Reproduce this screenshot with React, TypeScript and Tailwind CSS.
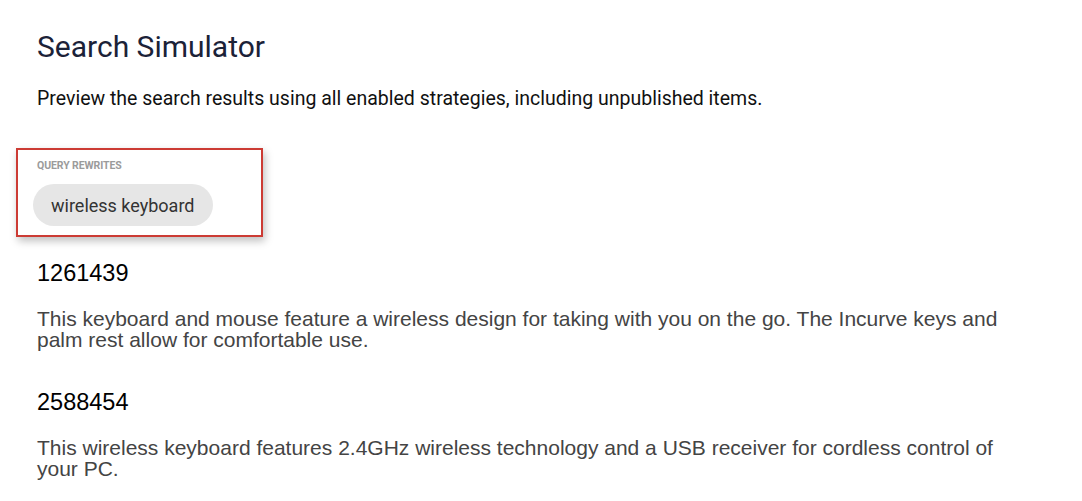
import React from "react";

const results = [
  {
    id: "1261439",
    desc: "This keyboard and mouse feature a wireless design for taking with you on the go. The Incurve keys and palm rest allow for comfortable use.",
  },
  {
    id: "2588454",
    desc: "This wireless keyboard features 2.4GHz wireless technology and a USB receiver for cordless control of your PC.",
  },
];

export default function App() {
  return (
    <div className="min-h-[501px] w-[1082px] bg-white px-[37px] pt-[29px]">
      <h1 className="font-['Roboto',sans-serif] text-[30px] leading-[36px] font-normal text-[#1b2238]">
        Search Simulator
      </h1>
      <p className="mt-[21px] font-['Roboto',sans-serif] text-[19.5px] leading-[26px] text-[#111111]">
        Preview the search results using all enabled strategies, including unpublished items.
      </p>

      <div className="mt-[36px] -ml-[21px] w-[247px] border-2 border-[#cc3b34] bg-white pt-[10px] pb-[9px] pl-[15px] shadow-[2px_4px_8px_rgba(0,0,0,0.25)]">
        <div className="ml-[4px] font-['Roboto',sans-serif] text-[10.5px] leading-[12px] font-bold uppercase tracking-[-0.1px] text-[#9b9b9b]">
          Query Rewrites
        </div>
        <div className="mt-[12px] flex">
          <span className="flex h-[42px] items-center rounded-full bg-[#e6e6e6] px-[18px] font-['Roboto',sans-serif] text-[18px] text-[#333333]">
            wireless keyboard
          </span>
        </div>
      </div>

      <div className="mt-[22px] flex flex-col gap-[38px] font-['Liberation_Sans',Arial,sans-serif]">
        {results.map((r) => (
          <div key={r.id} className="flex flex-col">
            <div className="text-[23.5px] leading-[28px] text-black">{r.id}</div>
            <p className="mt-[21px] w-[1000px] text-[21px] leading-[21px] text-[#444444]">
              {r.desc}
            </p>
          </div>
        ))}
      </div>
    </div>
  );
}
